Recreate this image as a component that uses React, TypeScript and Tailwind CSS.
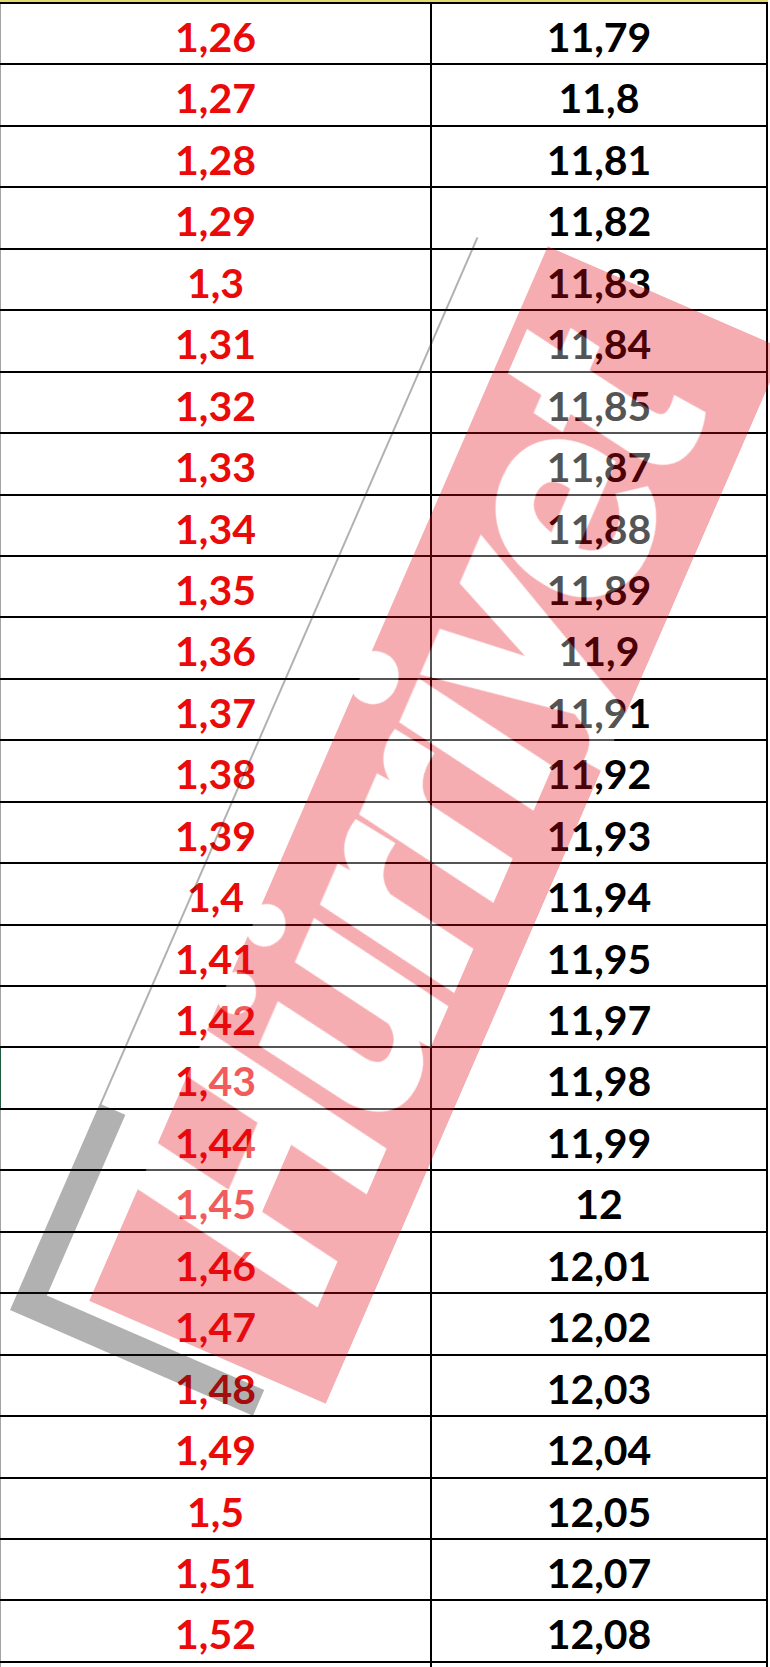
import React from "react";

const left = ["1,26","1,27","1,28","1,29","1,3","1,31","1,32","1,33","1,34","1,35","1,36","1,37","1,38","1,39","1,4","1,41","1,42","1,43","1,44","1,45","1,46","1,47","1,48","1,49","1,5","1,51","1,52"];
const right = ["11,79","11,8","11,81","11,82","11,83","11,84","11,85","11,87","11,88","11,89","11,9","11,91","11,92","11,93","11,94","11,95","11,97","11,98","11,99","12","12,01","12,02","12,03","12,04","12,05","12,07","12,08"];

function Row({ l, r, green }: { l: string; r: string; green?: boolean }) {
  return (
    <div className="flex h-[61.44px] border-t-2 border-black">
      <div
        className={
          "w-[430px] flex justify-center items-start pt-[12px] border-l " +
          (green ? "border-[#1d5b3c]" : "border-[#a4a4a4]")
        }
      >
        <span className="text-[41px] leading-[41px] font-bold text-[#ea0a0a]">{l}</span>
      </div>
      <div className="w-[338px] flex justify-center items-start pt-[12px] border-l-2 border-r-2 border-black">
        <span className="text-[41px] leading-[41px] font-bold text-black">{r}</span>
      </div>
    </div>
  );
}

function Watermark() {
  return (
    <div className="absolute left-[10px] top-[1310px] w-0 h-0 origin-top-left rotate-[-66.5deg] opacity-[0.33] pointer-events-none">
      {/* thin frame line */}
      <div className="absolute left-0 top-0 w-[1170px] h-[2px] bg-[#111]" />
      {/* thick frame corner */}
      <div className="absolute left-0 top-0 w-[225px] h-[28px] bg-[#111]" />
      <div className="absolute left-0 top-0 w-[28px] h-[265px] bg-[#111]" />
      {/* red box */}
      <div className="absolute left-[40px] top-[69px] w-[1150px] h-[258px] bg-[#e30613] flex items-start justify-center overflow-hidden">
        <span
          className="text-white font-black italic text-[300px] leading-[300px] tracking-[-12px] mt-[-40px]"
          style={{ fontFamily: 'Roboto, "DejaVu Sans", sans-serif' }}
        >
          Hürriyet
        </span>
      </div>
    </div>
  );
}

export default function App() {
  return (
    <div
      className="relative w-[770px] h-[1667px] overflow-hidden bg-white"
      style={{ fontFamily: 'Lato, "Liberation Sans", sans-serif' }}
    >
      <div className="w-[768px] border-t-2 border-[#e4dc6c]">
        {left.map((l, i) => (
          <Row key={i} l={l} r={right[i]} green={i === 17} />
        ))}
        <div className="flex h-[10px] border-t-2 border-black">
          <div className="w-[430px] border-l border-[#a4a4a4]" />
          <div className="w-[338px] border-l-2 border-r-2 border-black" />
        </div>
      </div>
      <Watermark />
    </div>
  );
}
